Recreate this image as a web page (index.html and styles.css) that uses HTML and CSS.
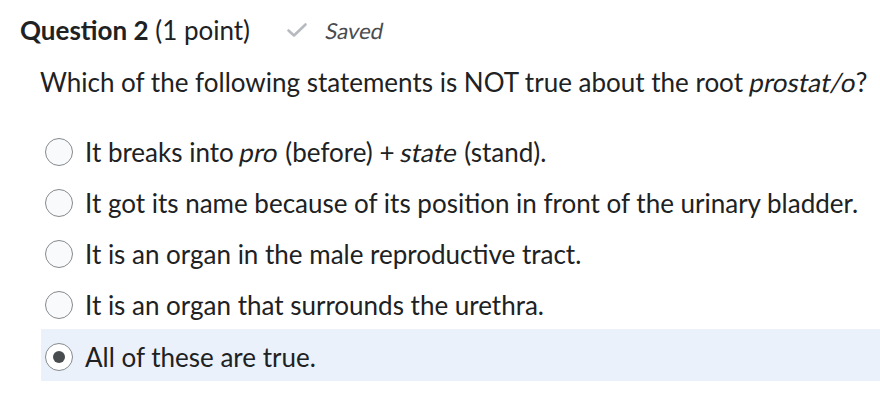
FILE: index.html
```html
<!DOCTYPE html>
<html lang="en">
<head>
    <meta charset="UTF-8">
    <title>Question 2</title>
    <link rel="stylesheet" href="styles.css">
</head>
<body>

    <div class="question">
        <div class="question-header">
            <h2><strong>Question 2</strong> (1 point)</h2>
            <span class="saved">
                <svg class="check" width="22" height="16" viewBox="0 0 22 16">
                    <path d="M2.5 8.5 L8 13.5 L19.5 2.5" fill="none" stroke="#b7bbbf" stroke-width="2.6" stroke-linecap="round" stroke-linejoin="round"/>
                </svg>
                <em>Saved</em>
            </span>
        </div>

        <p class="question-text">Which of the following statements is NOT true about the root <em>prostat/o</em>?</p>

        <div class="choices">
            <label class="choice">
                <span class="radio"></span>
                <span>It breaks into <em>pro</em> (before) + <em>state</em> (stand).</span>
            </label>
            <label class="choice">
                <span class="radio"></span>
                <span>It got its name because of its position in front of the urinary bladder.</span>
            </label>
            <label class="choice">
                <span class="radio"></span>
                <span>It is an organ in the male reproductive tract.</span>
            </label>
            <label class="choice">
                <span class="radio"></span>
                <span>It is an organ that surrounds the urethra.</span>
            </label>
            <label class="choice selected">
                <span class="radio"></span>
                <span>All of these are true.</span>
            </label>
        </div>
    </div>

</body>
</html>
```

FILE: styles.css
```css
body {
    margin: 0;
    font-family: 'Lato', 'Open Sans', sans-serif;
    color: #202122;
    background: #fff;
}
/* the installed Lato has no slanted face, so slant it by hand */
em {
    display: inline-block;
    font-style: normal;
    transform: skewX(-11deg);
}
.question {
    padding: 12px 0 0 20px;
}
.question-header {
    display: flex;
    align-items: center;
    gap: 36px;
}
h2 {
    margin: 0;
    font-size: 26px;
    font-weight: normal;
    line-height: 36px;
}
h2 strong {
    font-weight: bold;
}
.saved {
    display: flex;
    align-items: center;
    gap: 18px;
    color: #494c4e;
    font-size: 22px;
}
.question-text {
    margin: 18px 0 26px 20px;
    font-size: 26px;
    line-height: 32px;
}
/* Answer choices */
.choices {
    margin-left: 21px;
}
.choice {
    display: flex;
    align-items: center;
    gap: 12px;
    height: 51.25px;
    box-sizing: border-box;
    padding: 4px 0 0 4px;
    font-size: 26px;
}
.choice.selected {
    background-color: #eaf1fb;
    height: 52px;
}
.radio {
    width: 28px;
    height: 28px;
    box-sizing: border-box;
    border: 1px solid #868a8d;
    border-radius: 50%;
    background: #f9fafc;
    display: flex;
    align-items: center;
    justify-content: center;
    flex-shrink: 0;
}
.selected .radio {
    background: #fff;
}
.selected .radio::after {
    content: "";
    width: 12px;
    height: 12px;
    border-radius: 50%;
    background: #494c4e;
}
```
